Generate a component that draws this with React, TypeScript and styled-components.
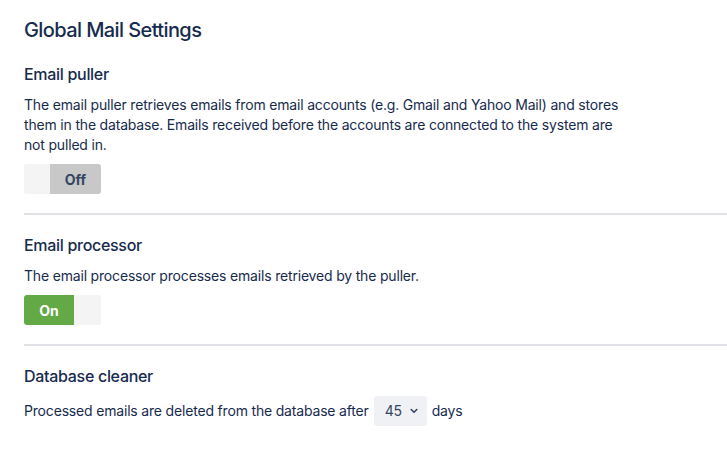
import React from "react";
import styled, { createGlobalStyle } from "styled-components";

const Global = createGlobalStyle`
  html, body { margin: 0; padding: 0; background: #fff; }
  body { font-family: Inter, "Noto Sans", sans-serif; color: #172B4D; }
  * { box-sizing: border-box; }
`;

const Page = styled.div`
  padding: 17px 0 0 24px;
  width: 727px;
`;

const Title = styled.h1`
  margin: 0;
  font-size: 20px;
  font-weight: 500;
  line-height: 26px;
  letter-spacing: -0.6px;
`;

const Section = styled.section<{ $first?: boolean; $last?: boolean }>`
  padding-top: ${(p) => (p.$first ? "21px" : "20px")};
  padding-bottom: 19px;
  border-bottom: ${(p) => (p.$last ? "none" : "2px solid #DFE1E6")};
`;

const Heading = styled.h2`
  margin: 0;
  font-size: 16px;
  font-weight: 500;
  line-height: 20px;
  letter-spacing: -0.3px;
`;

const Text = styled.p`
  margin: 11px 0 0 0;
  font-size: 14px;
  line-height: 20px;
  letter-spacing: -0.18px;
  max-width: 604px;
`;

const Toggle = styled.div`
  margin-top: 9px;
  display: flex;
  width: 77px;
  height: 30px;
  border-radius: 3px;
  overflow: hidden;
  background: #F4F5F7;
`;

const ToggleHalf = styled.div<{ $active: boolean; $on: boolean; $w: number }>`
  width: ${(p) => p.$w}px;
  display: flex;
  align-items: center;
  justify-content: center;
  font-size: 14px;
  font-weight: 700;
  background: ${(p) => (p.$active ? (p.$on ? "#63A945" : "#C8C8C8") : "#F4F4F4")};
  color: ${(p) => (p.$on ? "#fff" : "#344563")};
`;

const Row = styled.div`
  margin-top: 10px;
  display: flex;
  align-items: center;
  gap: 5px;
  font-size: 14px;
  line-height: 20px;
  letter-spacing: -0.18px;
`;

const Select = styled.div`
  display: flex;
  align-items: center;
  gap: 8px;
  height: 30px;
  width: 53px;
  padding: 0 0 0 11px;
  background: #F0F1F4;
  border-radius: 3px;
  font-size: 14px;
  color: #344563;
`;

const Chevron = () => (
  <svg width="8" height="6" viewBox="0 0 8 6">
    <path d="M1.2 1.5 L4 4.3 L6.8 1.5" fill="none" stroke="#344563" strokeWidth="1.6" strokeLinecap="round" strokeLinejoin="round" />
  </svg>
);

export default function App() {
  return (
    <Page>
      <Global />
      <Title>Global Mail Settings</Title>
      <Section $first>
        <Heading>Email puller</Heading>
        <Text>
          The email puller retrieves emails from email accounts (e.g. Gmail and Yahoo Mail) and stores
          them in the database. Emails received before the accounts are connected to the system are
          not pulled in.
        </Text>
        <Toggle>
          <ToggleHalf $active={false} $on={false} $w={26} />
          <ToggleHalf $active $on={false} $w={51}>Off</ToggleHalf>
        </Toggle>
      </Section>
      <Section>
        <Heading>Email processor</Heading>
        <Text>The email processor processes emails retrieved by the puller.</Text>
        <Toggle>
          <ToggleHalf $active $on $w={50}>On</ToggleHalf>
          <ToggleHalf $active={false} $on={false} $w={27} />
        </Toggle>
      </Section>
      <Section $last>
        <Heading>Database cleaner</Heading>
        <Row>
          <span>Processed emails are deleted from the database after</span>
          <Select>
            45 <Chevron />
          </Select>
          <span>days</span>
        </Row>
      </Section>
    </Page>
  );
}
